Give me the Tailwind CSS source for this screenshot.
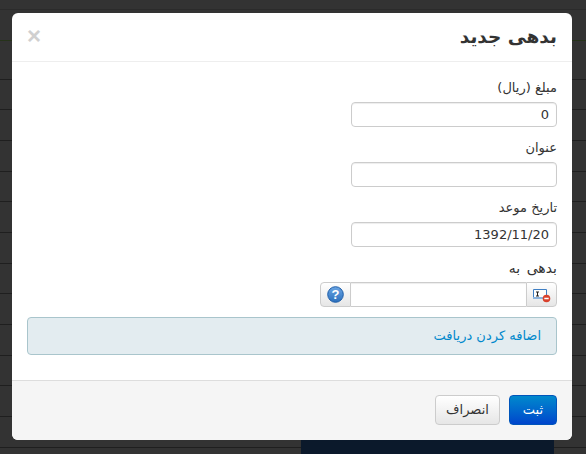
<!DOCTYPE html>
<html lang="fa" dir="rtl">
<head>
<meta charset="UTF-8">
<title>بدهی جدید</title>
<script src="https://cdn.jsdelivr.net/npm/@tailwindcss/browser@4"></script>
</head>
<body class="bg-[#333333] font-['DejaVu_Sans',sans-serif] text-[13px] text-[#333333] h-[454px] overflow-hidden">
<div class="relative h-[454px] overflow-hidden">
  <!-- table rows behind the overlay -->
  <div class="flex flex-col">
    <div class="h-[10px] border-b border-[#2b2b2b]"></div>
    <div class="h-[31px] border-b border-[#26331a]"></div>
    <div class="h-[39px] border-b border-[#1f1f1f]"></div>
    <div class="h-[30px] border-b border-[#1f1f1f]"></div>
    <div class="h-[31px] border-b border-[#1f1f1f]"></div>
    <div class="h-[31px] border-b border-[#1f1f1f]"></div>
    <div class="h-[30px] border-b border-[#1f1f1f]"></div>
    <div class="h-[31px] border-b border-[#1f1f1f]"></div>
    <div class="h-[31px] border-b border-[#1f1f1f]"></div>
    <div class="h-[30px] border-b border-[#1f1f1f]"></div>
    <div class="h-[31px] border-b border-[#1f1f1f]"></div>
    <div class="h-[31px] border-b border-[#1f1f1f]"></div>
    <div class="h-[30px] border-b border-[#1f1f1f]"></div>
    <div class="h-[31px] border-b border-[#1f1f1f]"></div>
    <div class="h-[31px] border-b border-[#1f1f1f]"></div>
  </div>
  <div class="absolute left-[301px] right-[32px] top-[440px] h-[14px] bg-[#0b192b]"></div>
  <div class="absolute left-[12px] top-[13px] w-[560px] h-[427px] bg-white rounded-[6px] flex flex-col overflow-hidden">
    <div class="h-[49px] border-b border-[#eeeeee] flex items-center justify-between px-[15px] shrink-0">
      <h3 class="text-[18.5px] font-bold text-[#333333]">بدهی جدید</h3>
      <span class="text-[#d0d0d0] text-[24px] leading-none font-bold font-['Liberation_Sans',sans-serif] mb-[3px]">×</span>
    </div>
    <div class="flex-1 px-[15px] pt-[15px]">
      <label class="block h-[25px] leading-[22px]">مبلغ (ریال)</label>
      <input dir="rtl" value="0" class="block w-[206px] h-[25px] border border-[#cccccc] rounded-[4px] px-[7px] shadow-[inset_0_1px_1px_rgba(0,0,0,0.075)]">
      <label class="block h-[25px] mt-[10px] leading-[22px]">عنوان</label>
      <input class="block w-[206px] h-[25px] border border-[#cccccc] rounded-[4px] px-[7px] shadow-[inset_0_1px_1px_rgba(0,0,0,0.075)]">
      <label class="block h-[25px] mt-[10px] leading-[22px]">تاریخ موعد</label>
      <input dir="rtl" value="1392/11/20" class="block w-[206px] h-[25px] border border-[#cccccc] rounded-[4px] px-[7px] shadow-[inset_0_1px_1px_rgba(0,0,0,0.075)]">
      <label class="block h-[25px] mt-[10px] leading-[22px] text-[14px] [word-spacing:2px]">بدهی به</label>
      <div class="flex h-[25px] w-[237px]">
        <button class="w-[31px] h-[25px] flex items-center justify-center border border-[#cccccc] rounded-r-[4px] bg-gradient-to-b from-white to-[#e6e6e6]">
          <svg width="19" height="16" viewBox="0 0 19 16"><path d="M1.5 2.5h13v9h-13z" fill="#fdfdfd" stroke="#3f7fc4"/><path d="M1 10h14v2H1z" fill="#8db4de"/><path d="M4 5h3M5.5 5v4M4 9h3" stroke="#222" fill="none"/><circle cx="14.5" cy="11.5" r="3.8" fill="#d9412c"/><path d="M12.3 11.5h4.4" stroke="#fff" stroke-width="1.6"/></svg>
        </button>
        <input class="w-[175px] h-[25px] border-y border-[#cccccc] shadow-[inset_0_1px_1px_rgba(0,0,0,0.075)]">
        <button class="w-[31px] h-[25px] flex items-center justify-center border border-[#cccccc] rounded-l-[4px] bg-gradient-to-b from-white to-[#e6e6e6]">
          <svg width="17" height="17" viewBox="0 0 17 17"><defs><linearGradient id="q" x1="0" y1="0" x2="0" y2="1"><stop offset="0" stop-color="#6ba6e4"/><stop offset="1" stop-color="#2b6fbd"/></linearGradient></defs><circle cx="8.5" cy="8.5" r="7.8" fill="url(#q)" stroke="#1f5ea8"/><text x="8.5" y="13" text-anchor="middle" font-size="13" font-weight="bold" fill="#fff" font-family="Liberation Sans">?</text></svg>
        </button>
      </div>
      <div class="mt-[10px] h-[38px] bg-[#e3ecf0] border border-[#a9c5cc] rounded-[4px] flex items-center px-[15px] text-[#0088cc]">اضافه کردن دریافت</div>
    </div>
    <div class="h-[60px] bg-[#f5f5f5] border-t border-[#dddddd] flex items-start pt-[14px] gap-[9px] px-[15px] shrink-0">
      <button class="w-[48px] h-[30px] rounded-[4px] text-white bg-gradient-to-b from-[#0088cc] to-[#0044cc] border border-[#0055bb]">ثبت</button>
      <button class="w-[65px] h-[30px] rounded-[4px] text-[#333333] bg-gradient-to-b from-white to-[#e6e6e6] border border-[#cccccc]">انصراف</button>
    </div>
  </div>
</div>
</body>
</html>
